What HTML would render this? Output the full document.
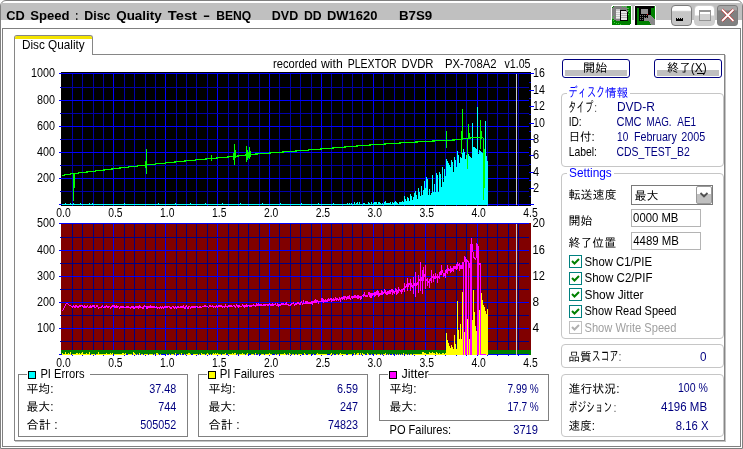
<!DOCTYPE html>
<html lang="ja"><head><meta charset="utf-8"><title>CD Speed : Disc Quality Test</title>
<style>
html,body{margin:0;padding:0;background:#fff;}
body{width:743px;height:449px;overflow:hidden;position:relative;font-family:"Liberation Sans", "IPAGothic", sans-serif;font-size:12px;}
.a{position:absolute;}
.win{position:absolute;left:0;top:0;width:743px;height:449px;box-sizing:border-box;border:1px solid #808080;border-radius:6px 6px 0 0;background:#fff;
}
.win>.a{margin:-1px 0 0 -1px;}
text{white-space:pre;}
svg.txt{will-change:transform;}
</style></head><body>
<div class="win"><div class="a" style="left:1px;top:3px;width:741px;height:17px;background:#c0c0c0"></div><div class="a" style="left:2px;top:28px;width:739px;height:419px;border:1px solid #808080;box-sizing:border-box"></div><div class="a" style="left:14px;top:54px;width:711px;height:387px;border:1px solid #868686;box-sizing:border-box;box-shadow:1px 1px 0 #c4c4c4"></div><div class="a" style="left:14px;top:35px;width:79px;height:20px;box-sizing:border-box;border:1px solid #868686;border-bottom:none;border-radius:3px 3px 0 0;background:#fff;overflow:hidden"><div class="a" style="left:0;top:0;width:79px;height:3px;background:#f4e400"></div></div><div class="a" style="left:18px;top:374px;width:170px;height:63px;border:1px solid #808080;box-sizing:border-box"></div><div class="a" style="left:27px;top:374px;width:63px;height:1px;background:#fff"></div><div class="a" style="left:28px;top:371px;width:8px;height:8px;background:#00ffff;border:1px solid #000;box-sizing:border-box"></div><div class="a" style="left:198px;top:374px;width:170px;height:63px;border:1px solid #808080;box-sizing:border-box"></div><div class="a" style="left:207px;top:374px;width:72px;height:1px;background:#fff"></div><div class="a" style="left:208px;top:371px;width:8px;height:8px;background:#ffff00;border:1px solid #000;box-sizing:border-box"></div><div class="a" style="left:379px;top:374px;width:170px;height:47px;border:1px solid #808080;box-sizing:border-box"></div><div class="a" style="left:388px;top:374px;width:40px;height:1px;background:#fff"></div><div class="a" style="left:389px;top:371px;width:8px;height:8px;background:#ff00ff;border:1px solid #000;box-sizing:border-box"></div><div class="a" style="left:561px;top:93px;width:163px;height:74px;border:1px solid #c6c6c6;box-sizing:border-box;border-radius:4px"></div><div class="a" style="left:567px;top:93px;width:63px;height:1px;background:#fff"></div><div class="a" style="left:561px;top:173px;width:163px;height:166px;border:1px solid #c6c6c6;box-sizing:border-box;border-radius:4px"></div><div class="a" style="left:567px;top:173px;width:47px;height:1px;background:#fff"></div><div class="a" style="left:561px;top:344px;width:163px;height:24px;border:1px solid #c6c6c6;box-sizing:border-box;border-radius:4px"></div><div class="a" style="left:561px;top:374px;width:163px;height:63px;border:1px solid #c6c6c6;box-sizing:border-box;border-radius:4px"></div><div class="a btn" style="left:562px;top:59px;width:68px;height:19px;border:1px solid #000080;box-sizing:border-box;border-radius:3px;background:#fff"><div class="a" style="left:2px;top:10px;width:62px;height:6px;background:#c0c0c0"></div></div><div class="a btn" style="left:654px;top:59px;width:68px;height:19px;border:1px solid #000080;box-sizing:border-box;border-radius:3px;background:#fff"><div class="a" style="left:2px;top:10px;width:62px;height:6px;background:#c0c0c0"></div></div><div class="a" style="left:697px;top:73px;width:7px;height:1px;background:#000"></div><div class="a" style="left:631px;top:185px;width:82px;height:20px;border:1px solid #7a7a7a;box-sizing:border-box;background:#fff"></div><div class="a" style="left:696px;top:186px;width:16px;height:18px;border:1px solid #9a9a9a;box-sizing:border-box;border-radius:2px;background:linear-gradient(#fff 0,#fff 45%,#c0c0c0 45%,#c0c0c0 100%)"><svg class="a" style="left:0;top:0" width="14" height="16"><path d="M3.5 6 L7 9.5 L10.5 6" fill="none" stroke="#505050" stroke-width="1.8"/></svg></div><div class="a" style="left:631px;top:209px;width:70px;height:18px;border:1px solid #b4b4b4;box-sizing:border-box;background:#fff"></div><div class="a" style="left:631px;top:232px;width:70px;height:18px;border:1px solid #b4b4b4;box-sizing:border-box;background:#fff"></div><div class="a" style="left:569px;top:255px;width:13px;height:13px;border:1px solid #008080;box-sizing:border-box;background:#fff"><svg class="a" style="left:0;top:0" width="11" height="11"><path d="M2 5 L4.5 7.5 L9 3" fill="none" stroke="#008000" stroke-width="2"/></svg></div><div class="a" style="left:569px;top:272px;width:13px;height:13px;border:1px solid #008080;box-sizing:border-box;background:#fff"><svg class="a" style="left:0;top:0" width="11" height="11"><path d="M2 5 L4.5 7.5 L9 3" fill="none" stroke="#008000" stroke-width="2"/></svg></div><div class="a" style="left:569px;top:288px;width:13px;height:13px;border:1px solid #008080;box-sizing:border-box;background:#fff"><svg class="a" style="left:0;top:0" width="11" height="11"><path d="M2 5 L4.5 7.5 L9 3" fill="none" stroke="#008000" stroke-width="2"/></svg></div><div class="a" style="left:569px;top:305px;width:13px;height:13px;border:1px solid #008080;box-sizing:border-box;background:#fff"><svg class="a" style="left:0;top:0" width="11" height="11"><path d="M2 5 L4.5 7.5 L9 3" fill="none" stroke="#008000" stroke-width="2"/></svg></div><div class="a" style="left:569px;top:321px;width:13px;height:13px;border:1px solid #c0c0c0;box-sizing:border-box;background:#fff"><svg class="a" style="left:0;top:0" width="11" height="11"><path d="M2 5 L4.5 7.5 L9 3" fill="none" stroke="#b0b0b0" stroke-width="2"/></svg></div><div class="a" style="left:671px;top:5px;width:21px;height:21px;border:1px solid #7c7c7c;box-sizing:border-box;border-radius:4px;background:linear-gradient(#fff 0,#fff 22%,#c6c6c6 30%)"><div class="a" style="left:4px;top:13px;width:7px;height:2px;background:#000"></div><div class="a" style="left:4px;top:12px;width:7px;height:1px;background:repeating-linear-gradient(90deg,#000 0,#000 1px,transparent 1px,transparent 2px)"></div></div><div class="a" style="left:694px;top:5px;width:21px;height:21px;border:1px solid #cccccc;box-sizing:border-box;border-radius:4px;background:linear-gradient(#fff 0,#fff 45%,#cecece 55%)"><div class="a" style="left:4px;top:4px;width:12px;height:11px;border:1px solid #949494;border-top:2px solid #949494;box-sizing:border-box;background:linear-gradient(#fff 0,#fff 30%,#d0d0d0 30%)"></div></div><div class="a" style="left:717px;top:5px;width:21px;height:21px;border:1px solid #7c7c7c;box-sizing:border-box;border-radius:3px;background:linear-gradient(#a6a6a6 0,#a6a6a6 20%,#808080 26%)"><svg class="a" style="left:0;top:0" width="19" height="19"><path d="M4 3.5 L15.5 15 M15.5 3.5 L4 15" stroke="#c00000" stroke-width="2.6"/><path d="M4 3.5 L15.5 15 M15.5 3.5 L4 15" stroke="#fff" stroke-width="1.8"/></svg></div><svg class="a" style="left:611px;top:5px" width="45" height="21" shape-rendering="crispEdges"><rect x="0" y="0" width="21" height="21" rx="3" fill="#fff"/><rect x="1" y="1" width="19" height="19" rx="2" fill="#008000"/><path d="M1 3 L3 1 H16 L17 4 L11 6 V15 L6 16 L1 13Z" fill="#808080"/><rect x="5" y="4" width="4" height="10" fill="#c8c8c8"/><path d="M5 6.5h4M5 8.5h4M5 10.5h4M5 12.5h4" stroke="#f0f0f0"/><rect x="9" y="5" width="8" height="11" fill="#000"/><rect x="10" y="6" width="6" height="9" fill="#e8e8e8"/><path d="M10 8.5h6M10 10.5h6M10 12.5h6" stroke="#b0b0b0"/><rect x="15" y="5" width="2" height="2" fill="#808080"/><path d="M11 1h1M13 1h1M15 2h1M17 3h1M17 5h1M18 7h1M17 9h1M1 13h1M2 15h1M3 17h1M5 18h1M7 18h1M9 19h1M2 11h1" stroke="#30e030"/><rect x="23" y="0" width="22" height="21" rx="3" fill="#fff"/><rect x="24" y="1" width="20" height="19" rx="1" fill="#008000"/><path d="M24 1 H43 V3 H26 V20 H24Z" fill="#000"/><rect x="28" y="3" width="12" height="13" fill="#000"/><rect x="30" y="4" width="7" height="5" fill="#909090"/><path d="M29 10.5h8M29 12.5h8M29 14.5h8" stroke="#707070" stroke-dasharray="1 1"/><rect x="36" y="9" width="1" height="1" fill="#e00000"/><path d="M37 10 L40 10 L44 15 V20 H40 L38 16 H33 V13 H37Z" fill="#888888"/></svg></div>
<svg class="a txt" style="left:0;top:0" width="743" height="449" viewBox="0 0 743 449" font-family='"Liberation Sans", "IPAGothic", sans-serif' shape-rendering="crispEdges"><rect x="61" y="72" width="470" height="134" fill="#000"/>
<rect x="72" y="73" width="1" height="132" fill="#0000a8"/>
<rect x="82" y="73" width="1" height="132" fill="#0000a8"/>
<rect x="93" y="73" width="1" height="132" fill="#0000a8"/>
<rect x="103" y="73" width="1" height="132" fill="#0000a8"/>
<rect x="113" y="73" width="1" height="132" fill="#0000ff"/>
<rect x="124" y="73" width="1" height="132" fill="#0000a8"/>
<rect x="134" y="73" width="1" height="132" fill="#0000a8"/>
<rect x="145" y="73" width="1" height="132" fill="#0000a8"/>
<rect x="155" y="73" width="1" height="132" fill="#0000a8"/>
<rect x="165" y="73" width="1" height="132" fill="#0000ff"/>
<rect x="176" y="73" width="1" height="132" fill="#0000a8"/>
<rect x="186" y="73" width="1" height="132" fill="#0000a8"/>
<rect x="196" y="73" width="1" height="132" fill="#0000a8"/>
<rect x="207" y="73" width="1" height="132" fill="#0000a8"/>
<rect x="217" y="73" width="1" height="132" fill="#0000ff"/>
<rect x="228" y="73" width="1" height="132" fill="#0000a8"/>
<rect x="238" y="73" width="1" height="132" fill="#0000a8"/>
<rect x="248" y="73" width="1" height="132" fill="#0000a8"/>
<rect x="259" y="73" width="1" height="132" fill="#0000a8"/>
<rect x="269" y="73" width="1" height="132" fill="#0000ff"/>
<rect x="279" y="73" width="1" height="132" fill="#0000a8"/>
<rect x="290" y="73" width="1" height="132" fill="#0000a8"/>
<rect x="300" y="73" width="1" height="132" fill="#0000a8"/>
<rect x="311" y="73" width="1" height="132" fill="#0000a8"/>
<rect x="321" y="73" width="1" height="132" fill="#0000ff"/>
<rect x="331" y="73" width="1" height="132" fill="#0000a8"/>
<rect x="342" y="73" width="1" height="132" fill="#0000a8"/>
<rect x="352" y="73" width="1" height="132" fill="#0000a8"/>
<rect x="362" y="73" width="1" height="132" fill="#0000a8"/>
<rect x="373" y="73" width="1" height="132" fill="#0000ff"/>
<rect x="383" y="73" width="1" height="132" fill="#0000a8"/>
<rect x="394" y="73" width="1" height="132" fill="#0000a8"/>
<rect x="404" y="73" width="1" height="132" fill="#0000a8"/>
<rect x="414" y="73" width="1" height="132" fill="#0000a8"/>
<rect x="425" y="73" width="1" height="132" fill="#0000ff"/>
<rect x="435" y="73" width="1" height="132" fill="#0000a8"/>
<rect x="445" y="73" width="1" height="132" fill="#0000a8"/>
<rect x="456" y="73" width="1" height="132" fill="#0000a8"/>
<rect x="466" y="73" width="1" height="132" fill="#0000a8"/>
<rect x="477" y="73" width="1" height="132" fill="#0000ff"/>
<rect x="487" y="73" width="1" height="132" fill="#0000a8"/>
<rect x="497" y="73" width="1" height="132" fill="#0000a8"/>
<rect x="508" y="73" width="1" height="132" fill="#0000a8"/>
<rect x="518" y="73" width="1" height="132" fill="#0000a8"/>
<rect x="61" y="73" width="468" height="1" fill="#0000ff"/>
<rect x="61" y="87" width="468" height="1" fill="#0000a8"/>
<rect x="61" y="100" width="468" height="1" fill="#0000ff"/>
<rect x="61" y="113" width="468" height="1" fill="#0000a8"/>
<rect x="61" y="126" width="468" height="1" fill="#0000ff"/>
<rect x="61" y="139" width="468" height="1" fill="#0000a8"/>
<rect x="61" y="152" width="468" height="1" fill="#0000ff"/>
<rect x="61" y="165" width="468" height="1" fill="#0000a8"/>
<rect x="61" y="178" width="468" height="1" fill="#0000ff"/>
<rect x="61" y="191" width="468" height="1" fill="#0000a8"/>
<rect x="61" y="204" width="468" height="1" fill="#0000ff"/>
<rect x="59" y="73" width="2" height="1" fill="#0000ff"/>
<rect x="60" y="87" width="1" height="1" fill="#0000c0"/>
<rect x="59" y="100" width="2" height="1" fill="#0000ff"/>
<rect x="60" y="113" width="1" height="1" fill="#0000c0"/>
<rect x="59" y="126" width="2" height="1" fill="#0000ff"/>
<rect x="60" y="139" width="1" height="1" fill="#0000c0"/>
<rect x="59" y="152" width="2" height="1" fill="#0000ff"/>
<rect x="60" y="165" width="1" height="1" fill="#0000c0"/>
<rect x="59" y="178" width="2" height="1" fill="#0000ff"/>
<rect x="60" y="191" width="1" height="1" fill="#0000c0"/>
<rect x="59" y="204" width="2" height="1" fill="#0000ff"/>
<rect x="529" y="204" width="5" height="1" fill="#0000ff"/>
<rect x="529" y="196" width="2" height="1" fill="#0000d0"/>
<rect x="529" y="188" width="5" height="1" fill="#0000ff"/>
<rect x="529" y="180" width="2" height="1" fill="#0000d0"/>
<rect x="529" y="172" width="5" height="1" fill="#0000ff"/>
<rect x="529" y="164" width="2" height="1" fill="#0000d0"/>
<rect x="529" y="155" width="5" height="1" fill="#0000ff"/>
<rect x="529" y="147" width="2" height="1" fill="#0000d0"/>
<rect x="529" y="139" width="5" height="1" fill="#0000ff"/>
<rect x="529" y="131" width="2" height="1" fill="#0000d0"/>
<rect x="529" y="123" width="5" height="1" fill="#0000ff"/>
<rect x="529" y="114" width="2" height="1" fill="#0000d0"/>
<rect x="529" y="106" width="5" height="1" fill="#0000ff"/>
<rect x="529" y="98" width="2" height="1" fill="#0000d0"/>
<rect x="529" y="90" width="5" height="1" fill="#0000ff"/>
<rect x="529" y="82" width="2" height="1" fill="#0000d0"/>
<rect x="529" y="73" width="5" height="1" fill="#0000ff"/>
<rect x="72" y="205" width="1" height="1" fill="#0000ff"/>
<rect x="82" y="205" width="1" height="1" fill="#0000ff"/>
<rect x="93" y="205" width="1" height="1" fill="#0000ff"/>
<rect x="103" y="205" width="1" height="1" fill="#0000ff"/>
<rect x="113" y="205" width="1" height="1" fill="#0000ff"/>
<rect x="124" y="205" width="1" height="1" fill="#0000ff"/>
<rect x="134" y="205" width="1" height="1" fill="#0000ff"/>
<rect x="145" y="205" width="1" height="1" fill="#0000ff"/>
<rect x="155" y="205" width="1" height="1" fill="#0000ff"/>
<rect x="165" y="205" width="1" height="1" fill="#0000ff"/>
<rect x="176" y="205" width="1" height="1" fill="#0000ff"/>
<rect x="186" y="205" width="1" height="1" fill="#0000ff"/>
<rect x="196" y="205" width="1" height="1" fill="#0000ff"/>
<rect x="207" y="205" width="1" height="1" fill="#0000ff"/>
<rect x="217" y="205" width="1" height="1" fill="#0000ff"/>
<rect x="228" y="205" width="1" height="1" fill="#0000ff"/>
<rect x="238" y="205" width="1" height="1" fill="#0000ff"/>
<rect x="248" y="205" width="1" height="1" fill="#0000ff"/>
<rect x="259" y="205" width="1" height="1" fill="#0000ff"/>
<rect x="269" y="205" width="1" height="1" fill="#0000ff"/>
<rect x="279" y="205" width="1" height="1" fill="#0000ff"/>
<rect x="290" y="205" width="1" height="1" fill="#0000ff"/>
<rect x="300" y="205" width="1" height="1" fill="#0000ff"/>
<rect x="311" y="205" width="1" height="1" fill="#0000ff"/>
<rect x="321" y="205" width="1" height="1" fill="#0000ff"/>
<rect x="331" y="205" width="1" height="1" fill="#0000ff"/>
<rect x="342" y="205" width="1" height="1" fill="#0000ff"/>
<rect x="352" y="205" width="1" height="1" fill="#0000ff"/>
<rect x="362" y="205" width="1" height="1" fill="#0000ff"/>
<rect x="373" y="205" width="1" height="1" fill="#0000ff"/>
<rect x="383" y="205" width="1" height="1" fill="#0000ff"/>
<rect x="394" y="205" width="1" height="1" fill="#0000ff"/>
<rect x="404" y="205" width="1" height="1" fill="#0000ff"/>
<rect x="414" y="205" width="1" height="1" fill="#0000ff"/>
<rect x="425" y="205" width="1" height="1" fill="#0000ff"/>
<rect x="435" y="205" width="1" height="1" fill="#0000ff"/>
<rect x="445" y="205" width="1" height="1" fill="#0000ff"/>
<rect x="456" y="205" width="1" height="1" fill="#0000ff"/>
<rect x="466" y="205" width="1" height="1" fill="#0000ff"/>
<rect x="477" y="205" width="1" height="1" fill="#0000ff"/>
<rect x="487" y="205" width="1" height="1" fill="#0000ff"/>
<rect x="497" y="205" width="1" height="1" fill="#0000ff"/>
<rect x="508" y="205" width="1" height="1" fill="#0000ff"/>
<rect x="518" y="205" width="1" height="1" fill="#0000ff"/>
<rect x="516" y="74" width="1" height="131" fill="#c8c8c8"/>
<path d="M62,205V204h1V204h1V204h1V203h1V204h1V204h1V204h1V204h1V203h1V204h1V204h1V203h1V204h1V204h1V204h1V204h1V204h1V204h1V203h1V204h1V204h1V204h1V204h1V204h1V204h1V204h1V204h1V203h1V204h1V204h1V203h1V204h1V204h1V204h1V204h1V204h1V204h1V204h1V204h1V204h1V204h1V204h1V204h1V204h1V204h1V204h1V204h1V204h1V204h1V204h1V204h1V204h1V204h1V204h1V204h1V204h1V204h1V204h1V204h1V204h1V204h1V204h1V203h1V204h1V204h1V204h1V204h1V204h1V204h1V204h1V204h1V204h1V204h1V204h1V204h1V204h1V204h1V204h1V204h1V204h1V204h1V204h1V204h1V204h1V204h1V204h1V204h1V204h1V204h1V204h1V204h1V204h1V204h1V204h1V204h1V204h1V203h1V204h1V204h1V204h1V204h1V204h1V204h1V204h1V204h1V204h1V204h1V204h1V204h1V204h1V204h1V204h1V204h1V203h1V204h1V204h1V204h1V204h1V204h1V204h1V204h1V204h1V204h1V204h1V204h1V204h1V204h1V204h1V203h1V204h1V204h1V204h1V204h1V204h1V204h1V204h1V204h1V204h1V204h1V204h1V204h1V204h1V204h1V203h1V204h1V204h1V204h1V204h1V204h1V204h1V204h1V204h1V204h1V204h1V204h1V204h1V204h1V204h1V204h1V204h1V203h1V204h1V204h1V204h1V204h1V204h1V204h1V204h1V204h1V204h1V204h1V204h1V204h1V204h1V204h1V204h1V204h1V204h1V203h1V204h1V204h1V204h1V204h1V204h1V204h1V204h1V204h1V204h1V204h1V204h1V204h1V204h1V204h1V204h1V204h1V204h1V204h1V204h1V204h1V204h1V203h1V204h1V204h1V204h1V204h1V204h1V204h1V204h1V204h1V204h1V204h1V204h1V204h1V204h1V204h1V204h1V204h1V204h1V203h1V204h1V204h1V204h1V204h1V204h1V204h1V204h1V204h1V204h1V204h1V204h1V204h1V204h1V204h1V204h1V204h1V204h1V204h1V204h1V204h1V203h1V204h1V204h1V204h1V204h1V204h1V204h1V204h1V204h1V204h1V204h1V204h1V204h1V204h1V204h1V204h1V204h1V203h1V204h1V204h1V204h1V204h1V204h1V204h1V204h1V204h1V204h1V204h1V204h1V204h1V204h1V204h1V203h1V204h1V204h1V204h1V204h1V204h1V204h1V204h1V204h1V204h1V204h1V204h1V204h1V204h1V203h1V204h1V203h1V204h1V203h1V204h1V204h1V202h1V204h1V203h1V202h1V204h1V202h1V204h1V204h1V204h1V203h1V203h1V204h1V204h1V204h1V202h1V203h1V204h1V202h1V204h1V203h1V202h1V202h1V202h1V204h1V202h1V202h1V203h1V204h1V203h1V204h1V202h1V201h1V203h1V203h1V203h1V203h1V202h1V204h1V202h1V203h1V202h1V201h1V202h1V203h1V204h1V202h1V202h1V202h1V201h1V202h1V196h1V199h1V201h1V197h1V198h1V201h1V194h1V196h1V200h1V197h1V193h1V191h1V195h1V199h1V188h1V192h1V196h1V186h1V195h1V190h1V181h1V188h1V177h1V179h1V195h1V189h1V195h1V193h1V175h1V192h1V184h1V192h1V173h1V175h1V192h1V172h1V174h1V187h1V167h1V182h1V169h1V176h1V159h1V161h1V163h1V165h1V167h1V160h1V162h1V172h1V157h1V160h1V167h1V151h1V155h1V163h1V157h1V158h1V153h1V149h1V152h1V159h1V155h1V156h1V154h1V156h1V157h1V158h1V123h1V147h1V147h1V148h1V149h1V107h1V154h1V150h1V151h1V152h1V153h1V151h1V150h1V121h1V156h1V161h1V205Z" fill="#00ffff"/>
<path d="M62,175.5 L68,174.5 L74,173.5 L100,170.5 L120,168 L146,165 L175,162 L211,158.5 L234,156.5 L250,154.5 L290,151.5 L321,149 L345,147 L370,145 L400,143 L430,141.2 L445,140.4 L462,139.6 L462.5,138.8 L467.5,138.8" fill="none" stroke="#00ff00" stroke-width="1.15"/>
<path d="M468.5,138 L483.5,137.6" fill="none" stroke="#00ff00" stroke-width="1.15"/>
<rect x="73" y="173" width="1" height="28" fill="#00ff00"/>
<rect x="74" y="173" width="1" height="15" fill="#00ff00"/>
<rect x="146" y="149" width="1" height="25" fill="#00ff00"/>
<rect x="145" y="161" width="1" height="7" fill="#00ff00"/>
<rect x="211" y="155" width="1" height="6" fill="#00ff00"/>
<rect x="233" y="153" width="1" height="7" fill="#00ff00"/>
<rect x="234" y="144" width="1" height="21" fill="#00ff00"/>
<rect x="235" y="150" width="1" height="8" fill="#00ff00"/>
<rect x="246" y="146" width="1" height="16" fill="#00ff00"/>
<rect x="247" y="150" width="1" height="10" fill="#00ff00"/>
<rect x="248" y="152" width="1" height="6" fill="#00ff00"/>
<rect x="249" y="147" width="1" height="12" fill="#00ff00"/>
<rect x="250" y="151" width="1" height="6" fill="#00ff00"/>
<rect x="446" y="131" width="1" height="17" fill="#00ff00"/>
<rect x="461" y="131" width="1" height="23" fill="#00ff00"/>
<rect x="462" y="109" width="1" height="31" fill="#00ff00"/>
<rect x="467" y="139" width="1" height="30" fill="#00ff00"/>
<rect x="468" y="124" width="1" height="15" fill="#00ff00"/>
<rect x="469" y="133" width="1" height="6" fill="#00ff00"/>
<rect x="480" y="120" width="1" height="29" fill="#00ff00"/>
<rect x="481" y="131" width="1" height="8" fill="#00ff00"/>
<rect x="483" y="138" width="1" height="62" fill="#00ff00"/>
<rect x="484" y="149" width="1" height="39" fill="#00ff00"/>
<rect x="61" y="223" width="470" height="132" fill="#800000"/>
<rect x="72" y="223" width="1" height="132" fill="#000084"/>
<rect x="82" y="223" width="1" height="132" fill="#000084"/>
<rect x="93" y="223" width="1" height="132" fill="#000084"/>
<rect x="103" y="223" width="1" height="132" fill="#000084"/>
<rect x="113" y="223" width="1" height="132" fill="#0000ff"/>
<rect x="124" y="223" width="1" height="132" fill="#000084"/>
<rect x="134" y="223" width="1" height="132" fill="#000084"/>
<rect x="145" y="223" width="1" height="132" fill="#000084"/>
<rect x="155" y="223" width="1" height="132" fill="#000084"/>
<rect x="165" y="223" width="1" height="132" fill="#0000ff"/>
<rect x="176" y="223" width="1" height="132" fill="#000084"/>
<rect x="186" y="223" width="1" height="132" fill="#000084"/>
<rect x="196" y="223" width="1" height="132" fill="#000084"/>
<rect x="207" y="223" width="1" height="132" fill="#000084"/>
<rect x="217" y="223" width="1" height="132" fill="#0000ff"/>
<rect x="228" y="223" width="1" height="132" fill="#000084"/>
<rect x="238" y="223" width="1" height="132" fill="#000084"/>
<rect x="248" y="223" width="1" height="132" fill="#000084"/>
<rect x="259" y="223" width="1" height="132" fill="#000084"/>
<rect x="269" y="223" width="1" height="132" fill="#0000ff"/>
<rect x="279" y="223" width="1" height="132" fill="#000084"/>
<rect x="290" y="223" width="1" height="132" fill="#000084"/>
<rect x="300" y="223" width="1" height="132" fill="#000084"/>
<rect x="311" y="223" width="1" height="132" fill="#000084"/>
<rect x="321" y="223" width="1" height="132" fill="#0000ff"/>
<rect x="331" y="223" width="1" height="132" fill="#000084"/>
<rect x="342" y="223" width="1" height="132" fill="#000084"/>
<rect x="352" y="223" width="1" height="132" fill="#000084"/>
<rect x="362" y="223" width="1" height="132" fill="#000084"/>
<rect x="373" y="223" width="1" height="132" fill="#0000ff"/>
<rect x="383" y="223" width="1" height="132" fill="#000084"/>
<rect x="394" y="223" width="1" height="132" fill="#000084"/>
<rect x="404" y="223" width="1" height="132" fill="#000084"/>
<rect x="414" y="223" width="1" height="132" fill="#000084"/>
<rect x="425" y="223" width="1" height="132" fill="#0000ff"/>
<rect x="435" y="223" width="1" height="132" fill="#000084"/>
<rect x="445" y="223" width="1" height="132" fill="#000084"/>
<rect x="456" y="223" width="1" height="132" fill="#000084"/>
<rect x="466" y="223" width="1" height="132" fill="#000084"/>
<rect x="477" y="223" width="1" height="132" fill="#0000ff"/>
<rect x="487" y="223" width="1" height="132" fill="#000084"/>
<rect x="497" y="223" width="1" height="132" fill="#000084"/>
<rect x="508" y="223" width="1" height="132" fill="#000084"/>
<rect x="518" y="223" width="1" height="132" fill="#000084"/>
<rect x="61" y="223" width="468" height="1" fill="#0000ff"/>
<rect x="61" y="237" width="468" height="1" fill="#000084"/>
<rect x="61" y="250" width="468" height="1" fill="#0000ff"/>
<rect x="61" y="263" width="468" height="1" fill="#000084"/>
<rect x="61" y="276" width="468" height="1" fill="#0000ff"/>
<rect x="61" y="289" width="468" height="1" fill="#000084"/>
<rect x="61" y="302" width="468" height="1" fill="#0000ff"/>
<rect x="61" y="315" width="468" height="1" fill="#000084"/>
<rect x="61" y="328" width="468" height="1" fill="#0000ff"/>
<rect x="61" y="341" width="468" height="1" fill="#000084"/>
<rect x="61" y="354" width="468" height="1" fill="#0000ff"/>
<rect x="59" y="223" width="2" height="1" fill="#0000ff"/>
<rect x="60" y="237" width="1" height="1" fill="#0000c0"/>
<rect x="59" y="250" width="2" height="1" fill="#0000ff"/>
<rect x="60" y="263" width="1" height="1" fill="#0000c0"/>
<rect x="59" y="276" width="2" height="1" fill="#0000ff"/>
<rect x="60" y="289" width="1" height="1" fill="#0000c0"/>
<rect x="59" y="302" width="2" height="1" fill="#0000ff"/>
<rect x="60" y="315" width="1" height="1" fill="#0000c0"/>
<rect x="59" y="328" width="2" height="1" fill="#0000ff"/>
<rect x="60" y="341" width="1" height="1" fill="#0000c0"/>
<rect x="59" y="354" width="2" height="1" fill="#0000ff"/>
<rect x="61" y="350" width="470" height="5" fill="#008000"/>
<rect x="61" y="354" width="468" height="1" fill="#0000ff"/>
<rect x="72" y="355" width="1" height="1" fill="#0000ff"/>
<rect x="82" y="355" width="1" height="1" fill="#0000ff"/>
<rect x="93" y="355" width="1" height="1" fill="#0000ff"/>
<rect x="103" y="355" width="1" height="1" fill="#0000ff"/>
<rect x="113" y="355" width="1" height="1" fill="#0000ff"/>
<rect x="124" y="355" width="1" height="1" fill="#0000ff"/>
<rect x="134" y="355" width="1" height="1" fill="#0000ff"/>
<rect x="145" y="355" width="1" height="1" fill="#0000ff"/>
<rect x="155" y="355" width="1" height="1" fill="#0000ff"/>
<rect x="165" y="355" width="1" height="1" fill="#0000ff"/>
<rect x="176" y="355" width="1" height="1" fill="#0000ff"/>
<rect x="186" y="355" width="1" height="1" fill="#0000ff"/>
<rect x="196" y="355" width="1" height="1" fill="#0000ff"/>
<rect x="207" y="355" width="1" height="1" fill="#0000ff"/>
<rect x="217" y="355" width="1" height="1" fill="#0000ff"/>
<rect x="228" y="355" width="1" height="1" fill="#0000ff"/>
<rect x="238" y="355" width="1" height="1" fill="#0000ff"/>
<rect x="248" y="355" width="1" height="1" fill="#0000ff"/>
<rect x="259" y="355" width="1" height="1" fill="#0000ff"/>
<rect x="269" y="355" width="1" height="1" fill="#0000ff"/>
<rect x="279" y="355" width="1" height="1" fill="#0000ff"/>
<rect x="290" y="355" width="1" height="1" fill="#0000ff"/>
<rect x="300" y="355" width="1" height="1" fill="#0000ff"/>
<rect x="311" y="355" width="1" height="1" fill="#0000ff"/>
<rect x="321" y="355" width="1" height="1" fill="#0000ff"/>
<rect x="331" y="355" width="1" height="1" fill="#0000ff"/>
<rect x="342" y="355" width="1" height="1" fill="#0000ff"/>
<rect x="352" y="355" width="1" height="1" fill="#0000ff"/>
<rect x="362" y="355" width="1" height="1" fill="#0000ff"/>
<rect x="373" y="355" width="1" height="1" fill="#0000ff"/>
<rect x="383" y="355" width="1" height="1" fill="#0000ff"/>
<rect x="394" y="355" width="1" height="1" fill="#0000ff"/>
<rect x="404" y="355" width="1" height="1" fill="#0000ff"/>
<rect x="414" y="355" width="1" height="1" fill="#0000ff"/>
<rect x="425" y="355" width="1" height="1" fill="#0000ff"/>
<rect x="435" y="355" width="1" height="1" fill="#0000ff"/>
<rect x="445" y="355" width="1" height="1" fill="#0000ff"/>
<rect x="456" y="355" width="1" height="1" fill="#0000ff"/>
<rect x="466" y="355" width="1" height="1" fill="#0000ff"/>
<rect x="477" y="355" width="1" height="1" fill="#0000ff"/>
<rect x="487" y="355" width="1" height="1" fill="#0000ff"/>
<rect x="497" y="355" width="1" height="1" fill="#0000ff"/>
<rect x="508" y="355" width="1" height="1" fill="#0000ff"/>
<rect x="518" y="355" width="1" height="1" fill="#0000ff"/>
<rect x="516" y="224" width="1" height="131" fill="#c8c8c8"/>
<path d="M62,355V353h1V354h1V354h1V352h1V354h1V354h1V353h1V354h1V352h1V355h1V354h1V354h1V354h1V354h1V353h1V353h1V354h1V353h1V354h1V353h1V352h1V354h1V354h1V354h1V353h1V354h1V354h1V352h1V355h1V354h1V354h1V354h1V354h1V355h1V354h1V354h1V352h1V354h1V354h1V354h1V354h1V354h1V354h1V354h1V353h1V354h1V354h1V354h1V353h1V354h1V353h1V355h1V354h1V354h1V354h1V354h1V354h1V354h1V354h1V354h1V353h1V353h1V354h1V353h1V355h1V355h1V354h1V354h1V354h1V354h1V355h1V352h1V353h1V354h1V355h1V354h1V355h1V353h1V355h1V354h1V354h1V355h1V354h1V354h1V354h1V354h1V355h1V354h1V354h1V354h1V354h1V355h1V354h1V355h1V353h1V353h1V354h1V355h1V354h1V355h1V355h1V355h1V355h1V355h1V354h1V355h1V355h1V354h1V355h1V354h1V354h1V354h1V355h1V353h1V355h1V355h1V355h1V354h1V355h1V353h1V355h1V355h1V354h1V355h1V354h1V354h1V353h1V353h1V354h1V355h1V355h1V354h1V354h1V354h1V354h1V354h1V355h1V354h1V355h1V353h1V354h1V354h1V354h1V355h1V354h1V353h1V354h1V355h1V354h1V355h1V354h1V353h1V354h1V353h1V354h1V353h1V354h1V354h1V354h1V355h1V354h1V354h1V354h1V353h1V355h1V355h1V354h1V354h1V354h1V354h1V353h1V354h1V353h1V353h1V355h1V354h1V355h1V354h1V354h1V354h1V353h1V354h1V354h1V355h1V354h1V353h1V355h1V355h1V355h1V354h1V354h1V354h1V355h1V353h1V355h1V355h1V354h1V355h1V355h1V354h1V354h1V354h1V355h1V354h1V354h1V354h1V354h1V353h1V354h1V354h1V355h1V355h1V355h1V354h1V355h1V354h1V354h1V355h1V354h1V354h1V354h1V354h1V353h1V354h1V355h1V354h1V355h1V353h1V354h1V355h1V354h1V354h1V355h1V354h1V354h1V355h1V354h1V354h1V354h1V354h1V355h1V355h1V353h1V354h1V355h1V355h1V354h1V354h1V354h1V355h1V355h1V354h1V355h1V355h1V354h1V353h1V354h1V354h1V354h1V354h1V354h1V354h1V354h1V354h1V354h1V355h1V355h1V355h1V354h1V353h1V355h1V354h1V355h1V355h1V354h1V354h1V355h1V354h1V353h1V354h1V354h1V354h1V354h1V354h1V355h1V355h1V354h1V354h1V354h1V354h1V355h1V355h1V353h1V355h1V354h1V353h1V353h1V355h1V353h1V355h1V353h1V354h1V354h1V355h1V355h1V353h1V354h1V355h1V355h1V354h1V355h1V355h1V354h1V354h1V355h1V354h1V354h1V354h1V355h1V354h1V355h1V354h1V354h1V353h1V355h1V354h1V355h1V354h1V355h1V355h1V354h1V355h1V355h1V354h1V355h1V354h1V355h1V354h1V355h1V354h1V355h1V353h1V355h1V354h1V354h1V355h1V354h1V355h1V354h1V354h1V355h1V354h1V354h1V354h1V354h1V354h1V354h1V354h1V354h1V354h1V352h1V352h1V353h1V353h1V354h1V354h1V354h1V352h1V353h1V353h1V352h1V353h1V353h1V354h1V352h1V353h1V354h1V353h1V354h1V354h1V353h1V353h1V354h1V353h1V333h1V340h1V343h1V346h1V348h1V345h1V347h1V349h1V335h1V344h1V349h1V301h1V330h1V339h1V324h1V339h1V292h1V318h1V332h1V323h1V328h1V319h1V330h1V339h1V335h1V329h1V320h1V290h1V312h1V326h1V331h1V301h1V316h1V310h1V296h1V293h1V300h1V305h1V307h1V311h1V314h1V309h1V355Z" fill="#ffff00"/>
<rect x="62" y="310" width="1" height="1" fill="#ff00ff"/>
<rect x="63" y="308" width="1" height="2" fill="#ff00ff"/>
<rect x="64" y="306" width="1" height="2" fill="#ff00ff"/>
<rect x="65" y="304" width="1" height="2" fill="#ff00ff"/>
<rect x="66" y="303" width="1" height="1" fill="#ff00ff"/>
<rect x="67" y="303" width="1" height="1" fill="#ff00ff"/>
<rect x="68" y="304" width="1" height="1" fill="#ff00ff"/>
<rect x="69" y="305" width="1" height="1" fill="#ff00ff"/>
<rect x="70" y="305" width="1" height="1" fill="#ff00ff"/>
<rect x="71" y="306" width="1" height="1" fill="#ff00ff"/>
<rect x="72" y="306" width="1" height="2" fill="#ff00ff"/>
<rect x="73" y="305" width="1" height="2" fill="#ff00ff"/>
<rect x="74" y="306" width="1" height="2" fill="#ff00ff"/>
<rect x="75" y="305" width="1" height="3" fill="#ff00ff"/>
<rect x="76" y="305" width="1" height="2" fill="#ff00ff"/>
<rect x="77" y="306" width="1" height="2" fill="#ff00ff"/>
<rect x="78" y="306" width="1" height="2" fill="#ff00ff"/>
<rect x="79" y="305" width="1" height="2" fill="#ff00ff"/>
<rect x="80" y="305" width="1" height="2" fill="#ff00ff"/>
<rect x="81" y="305" width="1" height="1" fill="#ff00ff"/>
<rect x="82" y="305" width="1" height="2" fill="#ff00ff"/>
<rect x="83" y="306" width="1" height="2" fill="#ff00ff"/>
<rect x="84" y="305" width="1" height="3" fill="#ff00ff"/>
<rect x="85" y="306" width="1" height="2" fill="#ff00ff"/>
<rect x="86" y="306" width="1" height="2" fill="#ff00ff"/>
<rect x="87" y="305" width="1" height="2" fill="#ff00ff"/>
<rect x="88" y="307" width="1" height="1" fill="#ff00ff"/>
<rect x="89" y="306" width="1" height="2" fill="#ff00ff"/>
<rect x="90" y="305" width="1" height="3" fill="#ff00ff"/>
<rect x="91" y="306" width="1" height="2" fill="#ff00ff"/>
<rect x="92" y="305" width="1" height="2" fill="#ff00ff"/>
<rect x="93" y="305" width="1" height="2" fill="#ff00ff"/>
<rect x="94" y="305" width="1" height="3" fill="#ff00ff"/>
<rect x="95" y="307" width="1" height="1" fill="#ff00ff"/>
<rect x="96" y="305" width="1" height="2" fill="#ff00ff"/>
<rect x="97" y="305" width="1" height="2" fill="#ff00ff"/>
<rect x="98" y="307" width="1" height="2" fill="#ff00ff"/>
<rect x="99" y="307" width="1" height="1" fill="#ff00ff"/>
<rect x="100" y="307" width="1" height="1" fill="#ff00ff"/>
<rect x="101" y="306" width="1" height="2" fill="#ff00ff"/>
<rect x="102" y="305" width="1" height="2" fill="#ff00ff"/>
<rect x="103" y="307" width="1" height="1" fill="#ff00ff"/>
<rect x="104" y="306" width="1" height="2" fill="#ff00ff"/>
<rect x="105" y="306" width="1" height="2" fill="#ff00ff"/>
<rect x="106" y="305" width="1" height="2" fill="#ff00ff"/>
<rect x="107" y="306" width="1" height="2" fill="#ff00ff"/>
<rect x="108" y="306" width="1" height="2" fill="#ff00ff"/>
<rect x="109" y="306" width="1" height="1" fill="#ff00ff"/>
<rect x="110" y="307" width="1" height="2" fill="#ff00ff"/>
<rect x="111" y="306" width="1" height="2" fill="#ff00ff"/>
<rect x="112" y="305" width="1" height="2" fill="#ff00ff"/>
<rect x="113" y="305" width="1" height="2" fill="#ff00ff"/>
<rect x="114" y="305" width="1" height="3" fill="#ff00ff"/>
<rect x="115" y="306" width="1" height="2" fill="#ff00ff"/>
<rect x="116" y="305" width="1" height="3" fill="#ff00ff"/>
<rect x="117" y="306" width="1" height="2" fill="#ff00ff"/>
<rect x="118" y="306" width="1" height="1" fill="#ff00ff"/>
<rect x="119" y="307" width="1" height="2" fill="#ff00ff"/>
<rect x="120" y="306" width="1" height="2" fill="#ff00ff"/>
<rect x="121" y="306" width="1" height="2" fill="#ff00ff"/>
<rect x="122" y="306" width="1" height="2" fill="#ff00ff"/>
<rect x="123" y="306" width="1" height="2" fill="#ff00ff"/>
<rect x="124" y="307" width="1" height="1" fill="#ff00ff"/>
<rect x="125" y="307" width="1" height="1" fill="#ff00ff"/>
<rect x="126" y="306" width="1" height="2" fill="#ff00ff"/>
<rect x="127" y="306" width="1" height="2" fill="#ff00ff"/>
<rect x="128" y="306" width="1" height="2" fill="#ff00ff"/>
<rect x="129" y="307" width="1" height="1" fill="#ff00ff"/>
<rect x="130" y="307" width="1" height="2" fill="#ff00ff"/>
<rect x="131" y="306" width="1" height="2" fill="#ff00ff"/>
<rect x="132" y="306" width="1" height="2" fill="#ff00ff"/>
<rect x="133" y="306" width="1" height="3" fill="#ff00ff"/>
<rect x="134" y="307" width="1" height="2" fill="#ff00ff"/>
<rect x="135" y="306" width="1" height="2" fill="#ff00ff"/>
<rect x="136" y="306" width="1" height="2" fill="#ff00ff"/>
<rect x="137" y="306" width="1" height="2" fill="#ff00ff"/>
<rect x="138" y="306" width="1" height="3" fill="#ff00ff"/>
<rect x="139" y="305" width="1" height="3" fill="#ff00ff"/>
<rect x="140" y="306" width="1" height="2" fill="#ff00ff"/>
<rect x="141" y="307" width="1" height="1" fill="#ff00ff"/>
<rect x="142" y="307" width="1" height="2" fill="#ff00ff"/>
<rect x="143" y="306" width="1" height="3" fill="#ff00ff"/>
<rect x="144" y="305" width="1" height="2" fill="#ff00ff"/>
<rect x="145" y="306" width="1" height="1" fill="#ff00ff"/>
<rect x="146" y="306" width="1" height="3" fill="#ff00ff"/>
<rect x="147" y="306" width="1" height="3" fill="#ff00ff"/>
<rect x="148" y="306" width="1" height="2" fill="#ff00ff"/>
<rect x="149" y="306" width="1" height="2" fill="#ff00ff"/>
<rect x="150" y="305" width="1" height="3" fill="#ff00ff"/>
<rect x="151" y="306" width="1" height="2" fill="#ff00ff"/>
<rect x="152" y="306" width="1" height="2" fill="#ff00ff"/>
<rect x="153" y="306" width="1" height="2" fill="#ff00ff"/>
<rect x="154" y="306" width="1" height="2" fill="#ff00ff"/>
<rect x="155" y="307" width="1" height="1" fill="#ff00ff"/>
<rect x="156" y="306" width="1" height="2" fill="#ff00ff"/>
<rect x="157" y="307" width="1" height="2" fill="#ff00ff"/>
<rect x="158" y="307" width="1" height="1" fill="#ff00ff"/>
<rect x="159" y="307" width="1" height="2" fill="#ff00ff"/>
<rect x="160" y="306" width="1" height="2" fill="#ff00ff"/>
<rect x="161" y="307" width="1" height="2" fill="#ff00ff"/>
<rect x="162" y="306" width="1" height="2" fill="#ff00ff"/>
<rect x="163" y="307" width="1" height="2" fill="#ff00ff"/>
<rect x="164" y="306" width="1" height="2" fill="#ff00ff"/>
<rect x="165" y="306" width="1" height="2" fill="#ff00ff"/>
<rect x="166" y="306" width="1" height="2" fill="#ff00ff"/>
<rect x="167" y="306" width="1" height="2" fill="#ff00ff"/>
<rect x="168" y="306" width="1" height="1" fill="#ff00ff"/>
<rect x="169" y="306" width="1" height="2" fill="#ff00ff"/>
<rect x="170" y="307" width="1" height="2" fill="#ff00ff"/>
<rect x="171" y="307" width="1" height="2" fill="#ff00ff"/>
<rect x="172" y="306" width="1" height="1" fill="#ff00ff"/>
<rect x="173" y="306" width="1" height="2" fill="#ff00ff"/>
<rect x="174" y="307" width="1" height="2" fill="#ff00ff"/>
<rect x="175" y="306" width="1" height="2" fill="#ff00ff"/>
<rect x="176" y="307" width="1" height="2" fill="#ff00ff"/>
<rect x="177" y="306" width="1" height="2" fill="#ff00ff"/>
<rect x="178" y="306" width="1" height="2" fill="#ff00ff"/>
<rect x="179" y="307" width="1" height="1" fill="#ff00ff"/>
<rect x="180" y="306" width="1" height="2" fill="#ff00ff"/>
<rect x="181" y="306" width="1" height="2" fill="#ff00ff"/>
<rect x="182" y="306" width="1" height="2" fill="#ff00ff"/>
<rect x="183" y="305" width="1" height="3" fill="#ff00ff"/>
<rect x="184" y="307" width="1" height="2" fill="#ff00ff"/>
<rect x="185" y="306" width="1" height="3" fill="#ff00ff"/>
<rect x="186" y="305" width="1" height="2" fill="#ff00ff"/>
<rect x="187" y="307" width="1" height="2" fill="#ff00ff"/>
<rect x="188" y="306" width="1" height="3" fill="#ff00ff"/>
<rect x="189" y="306" width="1" height="1" fill="#ff00ff"/>
<rect x="190" y="307" width="1" height="2" fill="#ff00ff"/>
<rect x="191" y="306" width="1" height="2" fill="#ff00ff"/>
<rect x="192" y="306" width="1" height="2" fill="#ff00ff"/>
<rect x="193" y="306" width="1" height="2" fill="#ff00ff"/>
<rect x="194" y="306" width="1" height="2" fill="#ff00ff"/>
<rect x="195" y="306" width="1" height="2" fill="#ff00ff"/>
<rect x="196" y="306" width="1" height="1" fill="#ff00ff"/>
<rect x="197" y="306" width="1" height="2" fill="#ff00ff"/>
<rect x="198" y="307" width="1" height="1" fill="#ff00ff"/>
<rect x="199" y="306" width="1" height="2" fill="#ff00ff"/>
<rect x="200" y="306" width="1" height="2" fill="#ff00ff"/>
<rect x="201" y="307" width="1" height="1" fill="#ff00ff"/>
<rect x="202" y="306" width="1" height="1" fill="#ff00ff"/>
<rect x="203" y="306" width="1" height="1" fill="#ff00ff"/>
<rect x="204" y="305" width="1" height="2" fill="#ff00ff"/>
<rect x="205" y="305" width="1" height="2" fill="#ff00ff"/>
<rect x="206" y="306" width="1" height="1" fill="#ff00ff"/>
<rect x="207" y="306" width="1" height="1" fill="#ff00ff"/>
<rect x="208" y="307" width="1" height="1" fill="#ff00ff"/>
<rect x="209" y="305" width="1" height="2" fill="#ff00ff"/>
<rect x="210" y="305" width="1" height="2" fill="#ff00ff"/>
<rect x="211" y="306" width="1" height="1" fill="#ff00ff"/>
<rect x="212" y="305" width="1" height="2" fill="#ff00ff"/>
<rect x="213" y="306" width="1" height="2" fill="#ff00ff"/>
<rect x="214" y="306" width="1" height="1" fill="#ff00ff"/>
<rect x="215" y="306" width="1" height="2" fill="#ff00ff"/>
<rect x="216" y="305" width="1" height="2" fill="#ff00ff"/>
<rect x="217" y="306" width="1" height="2" fill="#ff00ff"/>
<rect x="218" y="305" width="1" height="2" fill="#ff00ff"/>
<rect x="219" y="305" width="1" height="2" fill="#ff00ff"/>
<rect x="220" y="305" width="1" height="2" fill="#ff00ff"/>
<rect x="221" y="305" width="1" height="2" fill="#ff00ff"/>
<rect x="222" y="306" width="1" height="2" fill="#ff00ff"/>
<rect x="223" y="306" width="1" height="1" fill="#ff00ff"/>
<rect x="224" y="306" width="1" height="2" fill="#ff00ff"/>
<rect x="225" y="304" width="1" height="3" fill="#ff00ff"/>
<rect x="226" y="306" width="1" height="1" fill="#ff00ff"/>
<rect x="227" y="306" width="1" height="2" fill="#ff00ff"/>
<rect x="228" y="305" width="1" height="2" fill="#ff00ff"/>
<rect x="229" y="305" width="1" height="2" fill="#ff00ff"/>
<rect x="230" y="305" width="1" height="2" fill="#ff00ff"/>
<rect x="231" y="305" width="1" height="2" fill="#ff00ff"/>
<rect x="232" y="306" width="1" height="1" fill="#ff00ff"/>
<rect x="233" y="305" width="1" height="1" fill="#ff00ff"/>
<rect x="234" y="305" width="1" height="2" fill="#ff00ff"/>
<rect x="235" y="306" width="1" height="2" fill="#ff00ff"/>
<rect x="236" y="304" width="1" height="2" fill="#ff00ff"/>
<rect x="237" y="305" width="1" height="2" fill="#ff00ff"/>
<rect x="238" y="305" width="1" height="3" fill="#ff00ff"/>
<rect x="239" y="305" width="1" height="2" fill="#ff00ff"/>
<rect x="240" y="306" width="1" height="1" fill="#ff00ff"/>
<rect x="241" y="306" width="1" height="1" fill="#ff00ff"/>
<rect x="242" y="304" width="1" height="2" fill="#ff00ff"/>
<rect x="243" y="305" width="1" height="2" fill="#ff00ff"/>
<rect x="244" y="305" width="1" height="3" fill="#ff00ff"/>
<rect x="245" y="305" width="1" height="2" fill="#ff00ff"/>
<rect x="246" y="304" width="1" height="3" fill="#ff00ff"/>
<rect x="247" y="305" width="1" height="2" fill="#ff00ff"/>
<rect x="248" y="305" width="1" height="1" fill="#ff00ff"/>
<rect x="249" y="305" width="1" height="2" fill="#ff00ff"/>
<rect x="250" y="305" width="1" height="2" fill="#ff00ff"/>
<rect x="251" y="305" width="1" height="2" fill="#ff00ff"/>
<rect x="252" y="305" width="1" height="1" fill="#ff00ff"/>
<rect x="253" y="304" width="1" height="2" fill="#ff00ff"/>
<rect x="254" y="305" width="1" height="1" fill="#ff00ff"/>
<rect x="255" y="305" width="1" height="2" fill="#ff00ff"/>
<rect x="256" y="303" width="1" height="3" fill="#ff00ff"/>
<rect x="257" y="304" width="1" height="2" fill="#ff00ff"/>
<rect x="258" y="303" width="1" height="3" fill="#ff00ff"/>
<rect x="259" y="304" width="1" height="2" fill="#ff00ff"/>
<rect x="260" y="304" width="1" height="2" fill="#ff00ff"/>
<rect x="261" y="304" width="1" height="2" fill="#ff00ff"/>
<rect x="262" y="305" width="1" height="1" fill="#ff00ff"/>
<rect x="263" y="304" width="1" height="2" fill="#ff00ff"/>
<rect x="264" y="304" width="1" height="2" fill="#ff00ff"/>
<rect x="265" y="304" width="1" height="2" fill="#ff00ff"/>
<rect x="266" y="304" width="1" height="1" fill="#ff00ff"/>
<rect x="267" y="304" width="1" height="2" fill="#ff00ff"/>
<rect x="268" y="304" width="1" height="2" fill="#ff00ff"/>
<rect x="269" y="303" width="1" height="2" fill="#ff00ff"/>
<rect x="270" y="304" width="1" height="2" fill="#ff00ff"/>
<rect x="271" y="304" width="1" height="2" fill="#ff00ff"/>
<rect x="272" y="303" width="1" height="3" fill="#ff00ff"/>
<rect x="273" y="304" width="1" height="2" fill="#ff00ff"/>
<rect x="274" y="304" width="1" height="1" fill="#ff00ff"/>
<rect x="275" y="303" width="1" height="2" fill="#ff00ff"/>
<rect x="276" y="305" width="1" height="1" fill="#ff00ff"/>
<rect x="277" y="303" width="1" height="3" fill="#ff00ff"/>
<rect x="278" y="304" width="1" height="3" fill="#ff00ff"/>
<rect x="279" y="304" width="1" height="2" fill="#ff00ff"/>
<rect x="280" y="304" width="1" height="2" fill="#ff00ff"/>
<rect x="281" y="303" width="1" height="2" fill="#ff00ff"/>
<rect x="282" y="303" width="1" height="2" fill="#ff00ff"/>
<rect x="283" y="303" width="1" height="2" fill="#ff00ff"/>
<rect x="284" y="304" width="1" height="1" fill="#ff00ff"/>
<rect x="285" y="303" width="1" height="2" fill="#ff00ff"/>
<rect x="286" y="302" width="1" height="3" fill="#ff00ff"/>
<rect x="287" y="304" width="1" height="1" fill="#ff00ff"/>
<rect x="288" y="304" width="1" height="2" fill="#ff00ff"/>
<rect x="289" y="305" width="1" height="1" fill="#ff00ff"/>
<rect x="290" y="304" width="1" height="2" fill="#ff00ff"/>
<rect x="291" y="303" width="1" height="2" fill="#ff00ff"/>
<rect x="292" y="303" width="1" height="1" fill="#ff00ff"/>
<rect x="293" y="302" width="1" height="2" fill="#ff00ff"/>
<rect x="294" y="304" width="1" height="2" fill="#ff00ff"/>
<rect x="295" y="303" width="1" height="2" fill="#ff00ff"/>
<rect x="296" y="303" width="1" height="2" fill="#ff00ff"/>
<rect x="297" y="302" width="1" height="2" fill="#ff00ff"/>
<rect x="298" y="302" width="1" height="2" fill="#ff00ff"/>
<rect x="299" y="303" width="1" height="2" fill="#ff00ff"/>
<rect x="300" y="302" width="1" height="3" fill="#ff00ff"/>
<rect x="301" y="301" width="1" height="2" fill="#ff00ff"/>
<rect x="302" y="303" width="1" height="2" fill="#ff00ff"/>
<rect x="303" y="300" width="1" height="4" fill="#ff00ff"/>
<rect x="304" y="303" width="1" height="1" fill="#ff00ff"/>
<rect x="305" y="301" width="1" height="3" fill="#ff00ff"/>
<rect x="306" y="301" width="1" height="3" fill="#ff00ff"/>
<rect x="307" y="301" width="1" height="3" fill="#ff00ff"/>
<rect x="308" y="302" width="1" height="2" fill="#ff00ff"/>
<rect x="309" y="302" width="1" height="2" fill="#ff00ff"/>
<rect x="310" y="302" width="1" height="2" fill="#ff00ff"/>
<rect x="311" y="301" width="1" height="3" fill="#ff00ff"/>
<rect x="312" y="301" width="1" height="4" fill="#ff00ff"/>
<rect x="313" y="301" width="1" height="2" fill="#ff00ff"/>
<rect x="314" y="300" width="1" height="3" fill="#ff00ff"/>
<rect x="315" y="299" width="1" height="4" fill="#ff00ff"/>
<rect x="316" y="300" width="1" height="3" fill="#ff00ff"/>
<rect x="317" y="300" width="1" height="2" fill="#ff00ff"/>
<rect x="318" y="301" width="1" height="3" fill="#ff00ff"/>
<rect x="319" y="301" width="1" height="1" fill="#ff00ff"/>
<rect x="320" y="301" width="1" height="1" fill="#ff00ff"/>
<rect x="321" y="298" width="1" height="4" fill="#ff00ff"/>
<rect x="322" y="298" width="1" height="4" fill="#ff00ff"/>
<rect x="323" y="299" width="1" height="4" fill="#ff00ff"/>
<rect x="324" y="300" width="1" height="2" fill="#ff00ff"/>
<rect x="325" y="299" width="1" height="3" fill="#ff00ff"/>
<rect x="326" y="300" width="1" height="2" fill="#ff00ff"/>
<rect x="327" y="299" width="1" height="3" fill="#ff00ff"/>
<rect x="328" y="298" width="1" height="3" fill="#ff00ff"/>
<rect x="329" y="299" width="1" height="2" fill="#ff00ff"/>
<rect x="330" y="298" width="1" height="2" fill="#ff00ff"/>
<rect x="331" y="298" width="1" height="4" fill="#ff00ff"/>
<rect x="332" y="299" width="1" height="2" fill="#ff00ff"/>
<rect x="333" y="298" width="1" height="3" fill="#ff00ff"/>
<rect x="334" y="299" width="1" height="2" fill="#ff00ff"/>
<rect x="335" y="297" width="1" height="3" fill="#ff00ff"/>
<rect x="336" y="298" width="1" height="3" fill="#ff00ff"/>
<rect x="337" y="298" width="1" height="2" fill="#ff00ff"/>
<rect x="338" y="299" width="1" height="2" fill="#ff00ff"/>
<rect x="339" y="297" width="1" height="3" fill="#ff00ff"/>
<rect x="340" y="298" width="1" height="4" fill="#ff00ff"/>
<rect x="341" y="297" width="1" height="2" fill="#ff00ff"/>
<rect x="342" y="297" width="1" height="3" fill="#ff00ff"/>
<rect x="343" y="296" width="1" height="3" fill="#ff00ff"/>
<rect x="344" y="296" width="1" height="4" fill="#ff00ff"/>
<rect x="345" y="296" width="1" height="2" fill="#ff00ff"/>
<rect x="346" y="297" width="1" height="3" fill="#ff00ff"/>
<rect x="347" y="296" width="1" height="3" fill="#ff00ff"/>
<rect x="348" y="296" width="1" height="3" fill="#ff00ff"/>
<rect x="349" y="295" width="1" height="4" fill="#ff00ff"/>
<rect x="350" y="298" width="1" height="2" fill="#ff00ff"/>
<rect x="351" y="296" width="1" height="2" fill="#ff00ff"/>
<rect x="352" y="296" width="1" height="3" fill="#ff00ff"/>
<rect x="353" y="296" width="1" height="2" fill="#ff00ff"/>
<rect x="354" y="295" width="1" height="3" fill="#ff00ff"/>
<rect x="355" y="295" width="1" height="3" fill="#ff00ff"/>
<rect x="356" y="296" width="1" height="2" fill="#ff00ff"/>
<rect x="357" y="295" width="1" height="4" fill="#ff00ff"/>
<rect x="358" y="295" width="1" height="4" fill="#ff00ff"/>
<rect x="359" y="296" width="1" height="2" fill="#ff00ff"/>
<rect x="360" y="296" width="1" height="4" fill="#ff00ff"/>
<rect x="361" y="296" width="1" height="3" fill="#ff00ff"/>
<rect x="362" y="295" width="1" height="1" fill="#ff00ff"/>
<rect x="363" y="294" width="1" height="3" fill="#ff00ff"/>
<rect x="364" y="292" width="1" height="4" fill="#ff00ff"/>
<rect x="365" y="295" width="1" height="2" fill="#ff00ff"/>
<rect x="366" y="295" width="1" height="2" fill="#ff00ff"/>
<rect x="367" y="295" width="1" height="2" fill="#ff00ff"/>
<rect x="368" y="292" width="1" height="3" fill="#ff00ff"/>
<rect x="369" y="292" width="1" height="5" fill="#ff00ff"/>
<rect x="370" y="293" width="1" height="5" fill="#ff00ff"/>
<rect x="371" y="293" width="1" height="5" fill="#ff00ff"/>
<rect x="372" y="293" width="1" height="3" fill="#ff00ff"/>
<rect x="373" y="293" width="1" height="2" fill="#ff00ff"/>
<rect x="374" y="292" width="1" height="5" fill="#ff00ff"/>
<rect x="375" y="292" width="1" height="4" fill="#ff00ff"/>
<rect x="376" y="291" width="1" height="4" fill="#ff00ff"/>
<rect x="377" y="290" width="1" height="5" fill="#ff00ff"/>
<rect x="378" y="291" width="1" height="6" fill="#ff00ff"/>
<rect x="379" y="293" width="1" height="3" fill="#ff00ff"/>
<rect x="380" y="293" width="1" height="2" fill="#ff00ff"/>
<rect x="381" y="290" width="1" height="5" fill="#ff00ff"/>
<rect x="382" y="291" width="1" height="4" fill="#ff00ff"/>
<rect x="383" y="292" width="1" height="2" fill="#ff00ff"/>
<rect x="384" y="289" width="1" height="4" fill="#ff00ff"/>
<rect x="385" y="290" width="1" height="4" fill="#ff00ff"/>
<rect x="386" y="292" width="1" height="3" fill="#ff00ff"/>
<rect x="387" y="291" width="1" height="4" fill="#ff00ff"/>
<rect x="388" y="291" width="1" height="3" fill="#ff00ff"/>
<rect x="389" y="290" width="1" height="4" fill="#ff00ff"/>
<rect x="390" y="290" width="1" height="4" fill="#ff00ff"/>
<rect x="391" y="289" width="1" height="3" fill="#ff00ff"/>
<rect x="392" y="289" width="1" height="6" fill="#ff00ff"/>
<rect x="393" y="290" width="1" height="3" fill="#ff00ff"/>
<rect x="394" y="291" width="1" height="3" fill="#ff00ff"/>
<rect x="395" y="288" width="1" height="4" fill="#ff00ff"/>
<rect x="396" y="289" width="1" height="6" fill="#ff00ff"/>
<rect x="397" y="290" width="1" height="4" fill="#ff00ff"/>
<rect x="398" y="287" width="1" height="6" fill="#ff00ff"/>
<rect x="399" y="289" width="1" height="2" fill="#ff00ff"/>
<rect x="400" y="290" width="1" height="2" fill="#ff00ff"/>
<rect x="401" y="289" width="1" height="5" fill="#ff00ff"/>
<rect x="402" y="289" width="1" height="3" fill="#ff00ff"/>
<rect x="403" y="288" width="1" height="2" fill="#ff00ff"/>
<rect x="404" y="283" width="1" height="9" fill="#ff00ff"/>
<rect x="405" y="286" width="1" height="2" fill="#ff00ff"/>
<rect x="406" y="284" width="1" height="3" fill="#ff00ff"/>
<rect x="407" y="278" width="1" height="13" fill="#ff00ff"/>
<rect x="408" y="283" width="1" height="4" fill="#ff00ff"/>
<rect x="409" y="283" width="1" height="2" fill="#ff00ff"/>
<rect x="410" y="279" width="1" height="12" fill="#ff00ff"/>
<rect x="411" y="283" width="1" height="4" fill="#ff00ff"/>
<rect x="412" y="285" width="1" height="3" fill="#ff00ff"/>
<rect x="413" y="277" width="1" height="17" fill="#ff00ff"/>
<rect x="414" y="283" width="1" height="3" fill="#ff00ff"/>
<rect x="415" y="272" width="1" height="25" fill="#ff00ff"/>
<rect x="416" y="283" width="1" height="3" fill="#ff00ff"/>
<rect x="417" y="282" width="1" height="3" fill="#ff00ff"/>
<rect x="418" y="275" width="1" height="18" fill="#ff00ff"/>
<rect x="419" y="279" width="1" height="2" fill="#ff00ff"/>
<rect x="420" y="262" width="1" height="29" fill="#ff00ff"/>
<rect x="421" y="277" width="1" height="4" fill="#ff00ff"/>
<rect x="422" y="270" width="1" height="24" fill="#ff00ff"/>
<rect x="423" y="267" width="1" height="14" fill="#ff00ff"/>
<rect x="424" y="274" width="1" height="3" fill="#ff00ff"/>
<rect x="425" y="265" width="1" height="24" fill="#ff00ff"/>
<rect x="426" y="279" width="1" height="2" fill="#ff00ff"/>
<rect x="427" y="278" width="1" height="8" fill="#ff00ff"/>
<rect x="428" y="281" width="1" height="2" fill="#ff00ff"/>
<rect x="429" y="279" width="1" height="9" fill="#ff00ff"/>
<rect x="430" y="278" width="1" height="3" fill="#ff00ff"/>
<rect x="431" y="270" width="1" height="13" fill="#ff00ff"/>
<rect x="432" y="276" width="1" height="2" fill="#ff00ff"/>
<rect x="433" y="274" width="1" height="8" fill="#ff00ff"/>
<rect x="434" y="276" width="1" height="3" fill="#ff00ff"/>
<rect x="435" y="273" width="1" height="6" fill="#ff00ff"/>
<rect x="436" y="276" width="1" height="2" fill="#ff00ff"/>
<rect x="437" y="274" width="1" height="9" fill="#ff00ff"/>
<rect x="438" y="276" width="1" height="2" fill="#ff00ff"/>
<rect x="439" y="272" width="1" height="7" fill="#ff00ff"/>
<rect x="440" y="271" width="1" height="4" fill="#ff00ff"/>
<rect x="441" y="265" width="1" height="10" fill="#ff00ff"/>
<rect x="442" y="270" width="1" height="3" fill="#ff00ff"/>
<rect x="443" y="273" width="1" height="4" fill="#ff00ff"/>
<rect x="444" y="273" width="1" height="3" fill="#ff00ff"/>
<rect x="445" y="270" width="1" height="8" fill="#ff00ff"/>
<rect x="446" y="269" width="1" height="4" fill="#ff00ff"/>
<rect x="447" y="265" width="1" height="9" fill="#ff00ff"/>
<rect x="448" y="268" width="1" height="3" fill="#ff00ff"/>
<rect x="449" y="269" width="1" height="2" fill="#ff00ff"/>
<rect x="450" y="266" width="1" height="7" fill="#ff00ff"/>
<rect x="451" y="268" width="1" height="4" fill="#ff00ff"/>
<rect x="452" y="268" width="1" height="3" fill="#ff00ff"/>
<rect x="453" y="266" width="1" height="6" fill="#ff00ff"/>
<rect x="454" y="266" width="1" height="3" fill="#ff00ff"/>
<rect x="455" y="266" width="1" height="3" fill="#ff00ff"/>
<rect x="456" y="264" width="1" height="6" fill="#ff00ff"/>
<rect x="457" y="262" width="1" height="7" fill="#ff00ff"/>
<rect x="458" y="264" width="1" height="2" fill="#ff00ff"/>
<rect x="459" y="263" width="1" height="8" fill="#ff00ff"/>
<rect x="460" y="265" width="1" height="4" fill="#ff00ff"/>
<rect x="461" y="265" width="1" height="4" fill="#ff00ff"/>
<rect x="462" y="262" width="1" height="7" fill="#ff00ff"/>
<rect x="463" y="262" width="1" height="2" fill="#ff00ff"/>
<rect x="464" y="256" width="1" height="6" fill="#ff00ff"/>
<rect x="465" y="257" width="1" height="2" fill="#ff00ff"/>
<rect x="466" y="259" width="1" height="11" fill="#ff00ff"/>
<rect x="467" y="260" width="1" height="2" fill="#ff00ff"/>
<rect x="468" y="261" width="1" height="2" fill="#ff00ff"/>
<rect x="469" y="263" width="1" height="5" fill="#ff00ff"/>
<rect x="470" y="244" width="1" height="19" fill="#ff00ff"/>
<rect x="471" y="238" width="1" height="6" fill="#ff00ff"/>
<rect x="472" y="244" width="1" height="8" fill="#ff00ff"/>
<rect x="473" y="252" width="1" height="6" fill="#ff00ff"/>
<rect x="474" y="257" width="1" height="2" fill="#ff00ff"/>
<rect x="475" y="258" width="1" height="2" fill="#ff00ff"/>
<rect x="476" y="243" width="1" height="15" fill="#ff00ff"/>
<rect x="477" y="244" width="1" height="2" fill="#ff00ff"/>
<rect x="478" y="246" width="1" height="19" fill="#ff00ff"/>
<rect x="479" y="263" width="1" height="2" fill="#ff00ff"/>
<rect x="480" y="263" width="1" height="2" fill="#ff00ff"/>
<rect x="463" y="262" width="1" height="93" fill="#ff00ff"/>
<rect x="465" y="257" width="1" height="98" fill="#ff00ff"/>
<rect x="466" y="268" width="1" height="87" fill="#ff00ff"/>
<rect x="468" y="261" width="1" height="94" fill="#ff00ff"/>
<rect x="470" y="244" width="1" height="111" fill="#ff00ff"/>
<rect x="471" y="238" width="1" height="117" fill="#ff00ff"/>
<rect x="477" y="244" width="1" height="111" fill="#ff00ff"/>
<rect x="478" y="263" width="1" height="92" fill="#ff00ff"/>
<rect x="480" y="263" width="1" height="92" fill="#ff00ff"/>
<rect x="481" y="354" width="5" height="1" fill="#ff00ff"/>
<text x="55.0" y="77" fill="#000" font-size="13" text-anchor="end" textLength="24.0" lengthAdjust="spacingAndGlyphs">1000</text>
<text x="55.0" y="104" fill="#000" font-size="13" text-anchor="end" textLength="18.0" lengthAdjust="spacingAndGlyphs">800</text>
<text x="55.0" y="130" fill="#000" font-size="13" text-anchor="end" textLength="18.0" lengthAdjust="spacingAndGlyphs">600</text>
<text x="55.0" y="156" fill="#000" font-size="13" text-anchor="end" textLength="18.0" lengthAdjust="spacingAndGlyphs">400</text>
<text x="55.0" y="182" fill="#000" font-size="13" text-anchor="end" textLength="18.0" lengthAdjust="spacingAndGlyphs">200</text>
<text x="55.0" y="227" fill="#000" font-size="13" text-anchor="end" textLength="18.0" lengthAdjust="spacingAndGlyphs">500</text>
<text x="55.0" y="254" fill="#000" font-size="13" text-anchor="end" textLength="18.0" lengthAdjust="spacingAndGlyphs">400</text>
<text x="55.0" y="280" fill="#000" font-size="13" text-anchor="end" textLength="18.0" lengthAdjust="spacingAndGlyphs">300</text>
<text x="55.0" y="306" fill="#000" font-size="13" text-anchor="end" textLength="18.0" lengthAdjust="spacingAndGlyphs">200</text>
<text x="55.0" y="332" fill="#000" font-size="13" text-anchor="end" textLength="18.0" lengthAdjust="spacingAndGlyphs">100</text>
<text x="533.0" y="77" fill="#000" font-size="13" text-anchor="start" textLength="11.8" lengthAdjust="spacingAndGlyphs">16</text>
<text x="533.0" y="94" fill="#000" font-size="13" text-anchor="start" textLength="11.8" lengthAdjust="spacingAndGlyphs">14</text>
<text x="533.0" y="110" fill="#000" font-size="13" text-anchor="start" textLength="11.8" lengthAdjust="spacingAndGlyphs">12</text>
<text x="533.0" y="127" fill="#000" font-size="13" text-anchor="start" textLength="11.8" lengthAdjust="spacingAndGlyphs">10</text>
<text x="533.0" y="143" fill="#000" font-size="13" text-anchor="start" textLength="6.1" lengthAdjust="spacingAndGlyphs">8</text>
<text x="533.0" y="159" fill="#000" font-size="13" text-anchor="start" textLength="6.1" lengthAdjust="spacingAndGlyphs">6</text>
<text x="533.0" y="176" fill="#000" font-size="13" text-anchor="start" textLength="6.1" lengthAdjust="spacingAndGlyphs">4</text>
<text x="533.0" y="192" fill="#000" font-size="13" text-anchor="start" textLength="6.1" lengthAdjust="spacingAndGlyphs">2</text>
<text x="532.5" y="227" fill="#000" font-size="13" text-anchor="start" textLength="12.3" lengthAdjust="spacingAndGlyphs">20</text>
<text x="532.5" y="254" fill="#000" font-size="13" text-anchor="start" textLength="12.3" lengthAdjust="spacingAndGlyphs">16</text>
<text x="532.5" y="280" fill="#000" font-size="13" text-anchor="start" textLength="12.3" lengthAdjust="spacingAndGlyphs">12</text>
<text x="532.5" y="306" fill="#000" font-size="13" text-anchor="start" textLength="6.6" lengthAdjust="spacingAndGlyphs">8</text>
<text x="532.5" y="332" fill="#000" font-size="13" text-anchor="start" textLength="6.6" lengthAdjust="spacingAndGlyphs">4</text>
<text x="63.5" y="217" fill="#000" font-size="13" text-anchor="middle" textLength="14.4" lengthAdjust="spacingAndGlyphs">0.0</text>
<text x="63.5" y="367" fill="#000" font-size="13" text-anchor="middle" textLength="14.4" lengthAdjust="spacingAndGlyphs">0.0</text>
<text x="115.4" y="217" fill="#000" font-size="13" text-anchor="middle" textLength="14.4" lengthAdjust="spacingAndGlyphs">0.5</text>
<text x="115.4" y="367" fill="#000" font-size="13" text-anchor="middle" textLength="14.4" lengthAdjust="spacingAndGlyphs">0.5</text>
<text x="167.3" y="217" fill="#000" font-size="13" text-anchor="middle" textLength="14.4" lengthAdjust="spacingAndGlyphs">1.0</text>
<text x="167.3" y="367" fill="#000" font-size="13" text-anchor="middle" textLength="14.4" lengthAdjust="spacingAndGlyphs">1.0</text>
<text x="219.2" y="217" fill="#000" font-size="13" text-anchor="middle" textLength="14.4" lengthAdjust="spacingAndGlyphs">1.5</text>
<text x="219.2" y="367" fill="#000" font-size="13" text-anchor="middle" textLength="14.4" lengthAdjust="spacingAndGlyphs">1.5</text>
<text x="271.1" y="217" fill="#000" font-size="13" text-anchor="middle" textLength="14.4" lengthAdjust="spacingAndGlyphs">2.0</text>
<text x="271.1" y="367" fill="#000" font-size="13" text-anchor="middle" textLength="14.4" lengthAdjust="spacingAndGlyphs">2.0</text>
<text x="322.9" y="217" fill="#000" font-size="13" text-anchor="middle" textLength="14.4" lengthAdjust="spacingAndGlyphs">2.5</text>
<text x="322.9" y="367" fill="#000" font-size="13" text-anchor="middle" textLength="14.4" lengthAdjust="spacingAndGlyphs">2.5</text>
<text x="374.8" y="217" fill="#000" font-size="13" text-anchor="middle" textLength="14.4" lengthAdjust="spacingAndGlyphs">3.0</text>
<text x="374.8" y="367" fill="#000" font-size="13" text-anchor="middle" textLength="14.4" lengthAdjust="spacingAndGlyphs">3.0</text>
<text x="426.7" y="217" fill="#000" font-size="13" text-anchor="middle" textLength="14.4" lengthAdjust="spacingAndGlyphs">3.5</text>
<text x="426.7" y="367" fill="#000" font-size="13" text-anchor="middle" textLength="14.4" lengthAdjust="spacingAndGlyphs">3.5</text>
<text x="478.6" y="217" fill="#000" font-size="13" text-anchor="middle" textLength="14.4" lengthAdjust="spacingAndGlyphs">4.0</text>
<text x="478.6" y="367" fill="#000" font-size="13" text-anchor="middle" textLength="14.4" lengthAdjust="spacingAndGlyphs">4.0</text>
<text x="530.5" y="217" fill="#000" font-size="13" text-anchor="middle" textLength="14.4" lengthAdjust="spacingAndGlyphs">4.5</text>
<text x="530.5" y="367" fill="#000" font-size="13" text-anchor="middle" textLength="14.4" lengthAdjust="spacingAndGlyphs">4.5</text>
<text y="20" fill="#000" font-size="13" font-weight="bold"><tspan x="6.2" textLength="18.5" lengthAdjust="spacingAndGlyphs">CD</tspan> <tspan x="30.2" textLength="39.3" lengthAdjust="spacingAndGlyphs">Speed</tspan> <tspan x="75.2" textLength="3.0" lengthAdjust="spacingAndGlyphs">:</tspan> <tspan x="84.3" textLength="26.2" lengthAdjust="spacingAndGlyphs">Disc</tspan> <tspan x="116.2" textLength="45.5" lengthAdjust="spacingAndGlyphs">Quality</tspan> <tspan x="167.8" textLength="29.2" lengthAdjust="spacingAndGlyphs">Test</tspan> <tspan x="203.1" textLength="7.1" lengthAdjust="spacingAndGlyphs">-</tspan> <tspan x="216.2" textLength="35.0" lengthAdjust="spacingAndGlyphs">BENQ</tspan> <tspan x="271.8" textLength="26.4" lengthAdjust="spacingAndGlyphs">DVD</tspan> <tspan x="304.0" textLength="17.7" lengthAdjust="spacingAndGlyphs">DD</tspan> <tspan x="327.0" textLength="50.4" lengthAdjust="spacingAndGlyphs">DW1620</tspan> <tspan x="398.9" textLength="33.3" lengthAdjust="spacingAndGlyphs">B7S9</tspan></text>
<text x="21.9" y="49" fill="#000" font-size="13" text-anchor="start" textLength="62.8" lengthAdjust="spacingAndGlyphs">Disc Quality</text>
<text y="68" fill="#000" font-size="13"><tspan x="273.0" textLength="44.0" lengthAdjust="spacingAndGlyphs">recorded</tspan> <tspan x="321.0" textLength="21.8" lengthAdjust="spacingAndGlyphs">with</tspan> <tspan x="347.7" textLength="49.0" lengthAdjust="spacingAndGlyphs">PLEXTOR</tspan> <tspan x="401.5" textLength="32.0" lengthAdjust="spacingAndGlyphs">DVDR</tspan> <tspan x="445.0" textLength="51.5" lengthAdjust="spacingAndGlyphs">PX-708A2</tspan> <tspan x="504.5" textLength="26.0" lengthAdjust="spacingAndGlyphs">v1.05</tspan></text>
<text x="40.4" y="378" fill="#000" font-size="13" text-anchor="start" textLength="44.1" lengthAdjust="spacingAndGlyphs">PI Errors</text>
<text x="219.7" y="378" fill="#000" font-size="13" text-anchor="start" textLength="54.7" lengthAdjust="spacingAndGlyphs">PI Failures</text>
<text x="401.5" y="378" fill="#000" font-size="13" text-anchor="start" textLength="27.3" lengthAdjust="spacingAndGlyphs">Jitter</text>
<text x="26.5" y="393" fill="#000" font-size="12" text-anchor="start" textLength="27.0" lengthAdjust="spacingAndGlyphs">平均:</text>
<text x="26.5" y="411" fill="#000" font-size="12" text-anchor="start" textLength="27.0" lengthAdjust="spacingAndGlyphs">最大:</text>
<text x="26.5" y="429" fill="#000" font-size="12" text-anchor="start" textLength="31.0" lengthAdjust="spacingAndGlyphs">合計 :</text>
<text x="176.2" y="393" fill="#000080" font-size="13" text-anchor="end" textLength="27.0" lengthAdjust="spacingAndGlyphs">37.48</text>
<text x="176.2" y="411" fill="#000080" font-size="13" text-anchor="end" textLength="18.0" lengthAdjust="spacingAndGlyphs">744</text>
<text x="176.2" y="429" fill="#000080" font-size="13" text-anchor="end" textLength="36.0" lengthAdjust="spacingAndGlyphs">505052</text>
<text x="208.5" y="393" fill="#000" font-size="12" text-anchor="start" textLength="27.0" lengthAdjust="spacingAndGlyphs">平均:</text>
<text x="208.5" y="411" fill="#000" font-size="12" text-anchor="start" textLength="27.0" lengthAdjust="spacingAndGlyphs">最大:</text>
<text x="208.5" y="429" fill="#000" font-size="12" text-anchor="start" textLength="31.0" lengthAdjust="spacingAndGlyphs">合計 :</text>
<text x="358.0" y="393" fill="#000080" font-size="13" text-anchor="end" textLength="21.0" lengthAdjust="spacingAndGlyphs">6.59</text>
<text x="358.0" y="411" fill="#000080" font-size="13" text-anchor="end" textLength="18.0" lengthAdjust="spacingAndGlyphs">247</text>
<text x="358.0" y="429" fill="#000080" font-size="13" text-anchor="end" textLength="30.0" lengthAdjust="spacingAndGlyphs">74823</text>
<text x="389.5" y="393" fill="#000" font-size="12" text-anchor="start" textLength="27.0" lengthAdjust="spacingAndGlyphs">平均:</text>
<text x="389.5" y="411" fill="#000" font-size="12" text-anchor="start" textLength="27.0" lengthAdjust="spacingAndGlyphs">最大:</text>
<text x="538.8" y="393" fill="#000080" font-size="13" text-anchor="end" textLength="31.3" lengthAdjust="spacingAndGlyphs">7.99 %</text>
<text x="538.8" y="411" fill="#000080" font-size="13" text-anchor="end" textLength="31.3" lengthAdjust="spacingAndGlyphs">17.7 %</text>
<text x="389.5" y="434" fill="#000" font-size="13" text-anchor="start" textLength="61.6" lengthAdjust="spacingAndGlyphs">PO Failures:</text>
<text x="538.0" y="434" fill="#000080" font-size="13" text-anchor="end" textLength="24.8" lengthAdjust="spacingAndGlyphs">3719</text>
<text x="583.0" y="72" fill="#000" font-size="12" text-anchor="start" textLength="24.3" lengthAdjust="spacingAndGlyphs">開始</text>
<text x="667.1" y="72" fill="#000" font-size="12" text-anchor="start" textLength="39.6" lengthAdjust="spacingAndGlyphs">終了(X)</text>
<text y="96.5" fill="#0000ff" font-size="12"><tspan x="568.6" font-size="14" textLength="36.7" lengthAdjust="spacingAndGlyphs">ディスク</tspan><tspan x="605.0" textLength="23.2" lengthAdjust="spacingAndGlyphs">情報</tspan></text>
<text x="569.0" y="176.5" fill="#0000ff" font-size="13" text-anchor="start" textLength="42.8" lengthAdjust="spacingAndGlyphs">Settings</text>
<text y="112.3" fill="#000" font-size="12"><tspan x="568.2" font-size="14" textLength="25.1" lengthAdjust="spacingAndGlyphs">タイプ</tspan><tspan x="594.8" font-size="13" textLength="2.0" lengthAdjust="spacingAndGlyphs">:</tspan></text>
<text x="568.7" y="126" fill="#000" font-size="13" text-anchor="start" textLength="13.0" lengthAdjust="spacingAndGlyphs">ID:</text>
<text x="568.7" y="141" fill="#000" font-size="12" text-anchor="start" textLength="26.0" lengthAdjust="spacingAndGlyphs">日付:</text>
<text x="568.7" y="156" fill="#000" font-size="13" text-anchor="start" textLength="28.3" lengthAdjust="spacingAndGlyphs">Label:</text>
<text x="616.9" y="111" fill="#000080" font-size="13" text-anchor="start" textLength="38.0" lengthAdjust="spacingAndGlyphs">DVD-R</text>
<text y="126" fill="#000080" font-size="13"><tspan x="616.4" textLength="25.2" lengthAdjust="spacingAndGlyphs">CMC</tspan> <tspan x="646.5" textLength="25.0" lengthAdjust="spacingAndGlyphs">MAG.</tspan> <tspan x="677.3" textLength="18.8" lengthAdjust="spacingAndGlyphs">AE1</tspan></text>
<text y="141" fill="#000080" font-size="13"><tspan x="617.1" textLength="11.2" lengthAdjust="spacingAndGlyphs">10</tspan> <tspan x="633.9" textLength="42.9" lengthAdjust="spacingAndGlyphs">February</tspan> <tspan x="681.3" textLength="24.0" lengthAdjust="spacingAndGlyphs">2005</tspan></text>
<text x="616.5" y="156" fill="#000080" font-size="13" text-anchor="start" textLength="73.2" lengthAdjust="spacingAndGlyphs">CDS_TEST_B2</text>
<text x="568.5" y="198.5" fill="#000" font-size="12" text-anchor="start" textLength="48.2" lengthAdjust="spacingAndGlyphs">転送速度</text>
<text x="634.5" y="199.5" fill="#000" font-size="12" text-anchor="start" textLength="23.9" lengthAdjust="spacingAndGlyphs">最大</text>
<text x="568.5" y="224.5" fill="#000" font-size="12" text-anchor="start" textLength="24.0" lengthAdjust="spacingAndGlyphs">開始</text>
<text x="633.1" y="222" fill="#000" font-size="13" text-anchor="start" textLength="45.3" lengthAdjust="spacingAndGlyphs">0000 MB</text>
<text x="568.5" y="246.5" fill="#000" font-size="12" text-anchor="start" textLength="47.6" lengthAdjust="spacingAndGlyphs">終了位置</text>
<text x="633.2" y="245" fill="#000" font-size="13" text-anchor="start" textLength="45.8" lengthAdjust="spacingAndGlyphs">4489 MB</text>
<text x="584.5" y="265.5" fill="#000" font-size="13" text-anchor="start" textLength="67.5" lengthAdjust="spacingAndGlyphs">Show C1/PIE</text>
<text x="584.5" y="282" fill="#000" font-size="13" text-anchor="start" textLength="68.0" lengthAdjust="spacingAndGlyphs">Show C2/PIF</text>
<text x="584.5" y="298.5" fill="#000" font-size="13" text-anchor="start" textLength="59.0" lengthAdjust="spacingAndGlyphs">Show Jitter</text>
<text x="584.5" y="315" fill="#000" font-size="13" text-anchor="start" textLength="92.0" lengthAdjust="spacingAndGlyphs">Show Read Speed</text>
<text x="584.5" y="331.5" fill="#a0a0a0" font-size="13" text-anchor="start" textLength="92.0" lengthAdjust="spacingAndGlyphs">Show Write Speed</text>
<text y="360.5" fill="#000" font-size="12"><tspan x="568.2" textLength="23.5" lengthAdjust="spacingAndGlyphs">品質</tspan><tspan x="591.8" font-size="14" textLength="26.6" lengthAdjust="spacingAndGlyphs">スコア</tspan><tspan x="619.0" font-size="13" textLength="2.0" lengthAdjust="spacingAndGlyphs">:</tspan></text>
<text x="700.1" y="361" fill="#000080" font-size="13" text-anchor="start" textLength="6.5" lengthAdjust="spacingAndGlyphs">0</text>
<text x="568.5" y="392.5" fill="#000" font-size="12" text-anchor="start" textLength="51.0" lengthAdjust="spacingAndGlyphs">進行状況:</text>
<text x="707.9" y="392" fill="#000080" font-size="13" text-anchor="end" textLength="29.9" lengthAdjust="spacingAndGlyphs">100 %</text>
<text y="412.3" fill="#000" font-size="12"><tspan x="568.7" font-size="13.5" textLength="43.6" lengthAdjust="spacingAndGlyphs">ポジション</tspan><tspan x="614.0" font-size="13" textLength="2.0" lengthAdjust="spacingAndGlyphs">:</tspan></text>
<text x="707.1" y="411" fill="#000080" font-size="13" text-anchor="end" textLength="46.0" lengthAdjust="spacingAndGlyphs">4196 MB</text>
<text x="568.5" y="430" fill="#000" font-size="12" text-anchor="start" textLength="26.5" lengthAdjust="spacingAndGlyphs">速度:</text>
<text x="708.5" y="430" fill="#000080" font-size="13" text-anchor="end" textLength="32.7" lengthAdjust="spacingAndGlyphs">8.16 X</text></svg>
</body></html>
